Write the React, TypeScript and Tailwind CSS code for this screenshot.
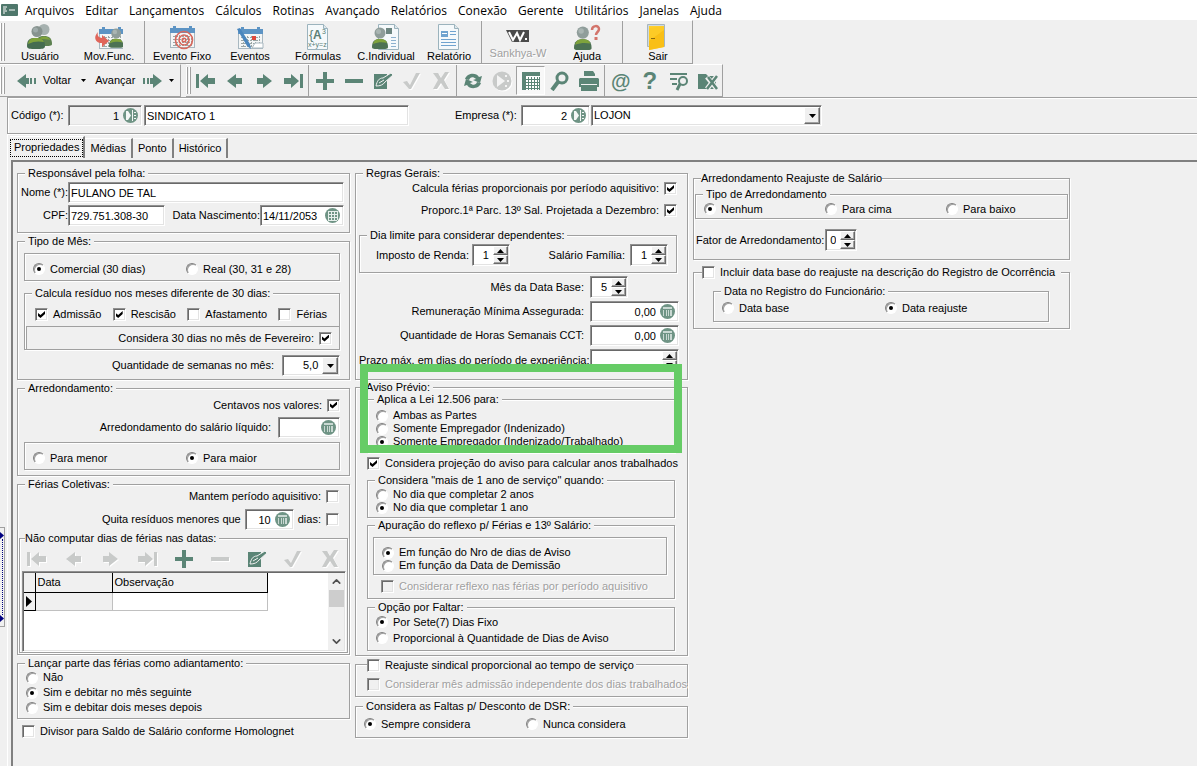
import type { ReactNode } from "react";
import { ChevronDown, ChevronUp } from "lucide-react";
import clsx from "clsx";

const menuItems = [
  "Arquivos", "Editar", "Lançamentos", "Cálculos", "Rotinas", "Avançado", "Relatórios",
  "Conexão", "Gerente", "Utilitários", "Janelas", "Ajuda",
];

const GREEN = "#5b8576";
const OFF = "#c8cac9";

/* ---------- toolbar drawings ---------- */

function Svg({ size = 20, className, children }: { size?: number; className?: string; children: ReactNode }) {
  return (
    <svg width={size} height={size} viewBox={`0 0 ${size} ${size}`} className={clsx("block shrink-0", className)} aria-hidden="true">
      {children}
    </svg>
  );
}

function Person() {
  return (
    <g>
      <circle cx="8" cy="6" r="5.5" fill="#8f9d9a" />
      <circle cx="6.5" cy="4.5" r="2.5" fill="#a9b5b2" />
      <path d="M0 20c0-6 3-8 8-8s8 2 8 8c0 2-2 2-8 2s-8 0-8-2z" fill="#4c7153" />
      <path d="M1 17c1-4 3-5 7-5s6 1 7 4c-4-1-9-1-14 1z" fill="#7fa23c" />
    </g>
  );
}

function Calendar() {
  return (
    <g>
      <rect x="1.5" y="4.5" width="24" height="17" fill="#f4f6f6" stroke="#a9b8c0" />
      <path d="M1 2h3V0h3v2h13V0h3v2h3v5H1z" fill="#5d94c4" />
      <path d="M4 10.5h19M4 13.500h19M4 16.500h19M4 19.500h19M6.500 9v12M10.500 9v12M14.500 9v12M18.500 9v12M22.500 9v12" stroke="#9aa6a6" strokeDasharray="2 1" />
    </g>
  );
}

function Doc({ x = 0 }: { x?: number }) {
  return (
    <g transform={`translate(${x} 0)`}>
      <path d="M.5.5h16l4 4v21H.5z" fill="#f5f9fb" stroke="#9bb3bd" />
      <path d="M16.500.5v4h4" fill="#dfe8ec" stroke="#9bb3bd" />
    </g>
  );
}

const bigIcons: Record<string, ReactNode> = {
  users: (
    <g transform="translate(1 0)">
      <circle cx="17" cy="5.500" r="5.500" fill="#a6b1af" />
      <path d="M10 19c0-6 2-7 7-7s8 2 8 8c0 2-3 2-8 2z" fill="#5c8050" />
      <path d="M12 15c2-3 8-4 12 1-4-1-8-1-12-1z" fill="#7fa23c" />
      <circle cx="10" cy="7.500" r="5.500" fill="#87938f" />
      <circle cx="8.500" cy="6" r="2.500" fill="#9fabaa" />
      <path d="M0 22c0-7 3-8 9-8s9 2 9 8c0 3-3 3-9 3s-9 0-9-3z" fill="#456c50" />
      <path d="M1 20c1-5 3-6 8-6s7 1 8 4c-5-1-10-1-16 2z" fill="#7fa23c" />
    </g>
  ),
  mov: (
    <g>
      <g transform="translate(3 3)"><Calendar /></g>
      <path d="M3 8c-5 5-3 11 4 11v4l7-6-7-6v3c-4 0-5-3-4-6z" fill="#e0655a" />
      <g transform="translate(14 4) scale(.9)"><Person /></g>
    </g>
  ),
  fixo: (
    <g transform="translate(1 2)">
      <Calendar />
      <g fill="none" stroke="#d8685c" strokeWidth="1.6">
        <circle cx="15" cy="14" r="8.500" />
        <circle cx="15" cy="14" r="5" />
        <circle cx="15" cy="14" r="1.800" />
      </g>
    </g>
  ),
  eventos: (
    <g transform="translate(1 3)">
      <Calendar />
      <rect x="15" y="9" width="4" height="4" fill="#e0493c" />
      <path d="M15 21l3-5h8v5z" fill="#fff" stroke="#a9b8c0" />
      <path d="M0 2l3-1 10 16 1 5-4-3z" fill="#4a86bd" />
    </g>
  ),
  formulas: (
    <g>
      <Doc x={3} />
      <text x="5" y="15" fontSize="13" fill="#5b7f77" fontFamily="Liberation Sans">{"{"}</text>
      <text x="9" y="15" fontSize="12" fontWeight="700" fill="#5b7f77" fontFamily="Liberation Sans">A</text>
      <text x="18" y="10" fontSize="7" fill="#5b7f77" fontFamily="Liberation Sans">3</text>
      <text x="4" y="23" fontSize="7" fill="#5b7f77" fontFamily="Liberation Sans">x+y=z</text>
    </g>
  ),
  individual: (
    <g>
      <Doc x={6} />
      <rect x="14" y="4" width="6" height="6" fill="#6c8580" />
      <path d="M19 13.500h5M19 16.500h5M19 19.500h5M19 22.500h5" stroke="#8db2cf" />
      <g transform="translate(0 3)"><Person /></g>
    </g>
  ),
  relatorio: (
    <g>
      <Doc x={3} />
      <rect x="6" y="7" width="7" height="6" fill="#6fa3cf" />
      <path d="M7 9.500h5" stroke="#fff" />
      <path d="M15 7.500h6M15 10.500h6M6 15.500h15M6 18.500h15M6 21.500h15" stroke="#6fa3cf" />
    </g>
  ),
  w: (
    <g transform="translate(2 6)">
      <path d="M0 0h23v12H6z" fill="#4b4b4b" />
      <path d="M3 2l4 8 4-7 3 7 4-8" fill="none" stroke="#fff" strokeWidth="2" />
      <rect x="19" y="8" width="2" height="2" fill="#fff" />
    </g>
  ),
  ajuda: (
    <g transform="translate(1 0)">
      <g transform="translate(0 2) scale(1.1)"><Person /></g>
      <path d="M18 6c0-5 7-5 7-1 0 3-3 3-3 6" fill="none" stroke="#d3746b" strokeWidth="2.500" />
      <rect x="20.500" y="13" width="3" height="3" fill="#d3746b" />
    </g>
  ),
  sair: (
    <g transform="translate(3 0)">
      <path d="M.5.5h17v22H.5z" fill="#cfd9df" stroke="#a7b5bd" />
      <path d="M2 2h15v20l-15 2z" fill="#ffcf2e" />
      <path d="M2 4L17 2v21L2 26z" fill="#fdcb26" />
      <path d="M2 17L17 6v17L2 26z" fill="#f9bf16" />
      <path d="M4 14.500h4" stroke="#8a6a10" />
    </g>
  ),
};

function ToolIcon({ name, off }: { name: string; off?: boolean }) {
  const c = off ? OFF : GREEN;
  const shapes: Record<string, ReactNode> = {
    first: <g fill={c}><rect x="0" y="3" width="3" height="14" /><path d="M12 3v4h7v6h-7v4L4 10z" /></g>,
    prev: <path d="M11 3v4h6v6h-6v4L2 10z" fill={c} />,
    next: <path d="M9 3v4H3v6h6v4l9-7z" fill={c} />,
    last: <g fill={c}><path d="M8 3v4H1v6h7v4l8-7z" /><rect x="17" y="3" width="3" height="14" /></g>,
    plus: <path d="M8 1h4v7h7v4h-7v7H8v-7H1V8h7z" fill={c} />,
    minus: <rect x="1" y="8" width="18" height="4" fill={c} />,
    edit: (
      <g>
        <path d="M1 3h13v15H1z" fill={c} />
        <path d="M3 15c1-5 3-8 7-8l8-5 2 2-8 7c-2 3-5 4-9 4z" fill={c} stroke="#f0f0f0" strokeWidth="1" />
        <path d="M6 12l5-3" stroke="#f0f0f0" />
      </g>
    ),
    check: <path d="M1 11l4-1 3 4 6-12h4L9 18H7z" fill={c} />,
    x: <path d="M2 2h5l3 5 4-6h4l-5 8 5 9h-4l-4-6-4 6H2l5-9z" fill={c} />,
    refresh: (
      <g fill={c}>
        <path d="M2 8c2-6 11-7 14-2l3-1-2 7-7-3 3-1c-3-3-6-2-7 1z" />
        <path d="M18 12c-2 6-11 7-14 2l-3 1 2-7 7 3-3 1c3 3 6 2 7-1z" />
      </g>
    ),
    play: (
      <g>
        <circle cx="10" cy="10" r="9.500" fill={c} />
        <path d="M5 4l8 6-8 6z" fill="#f4f4f4" />
        <path d="M13 4h2v2h-2zM15 9h2v2h-2zM13 14h2v2h-2z" fill="#f4f4f4" />
      </g>
    ),
    table: (
      <g>
        <rect x="1" y="2" width="18" height="17" fill="#fff" />
        <path d="M1 1h18v4H1zM1 5h4v14H1z" fill={c} />
        <path d="M5 8.500h14M5 11.500h14M5 14.500h14M5 17.500h14M7.500 6v13M10.500 6v13M13.500 6v13M16.500 6v13M18.500 6v13" stroke={c} />
      </g>
    ),
    search: (
      <g>
        <circle cx="12" cy="7" r="5" fill="none" stroke={c} strokeWidth="3" />
        <path d="M8 11l-6 8" stroke={c} strokeWidth="4" />
      </g>
    ),
    print: (
      <g fill={c}>
        <path d="M5 0h9l2 3v3H5zM1 7h18l1 1v8h-2v4H2v-4H0V8z" />
        <path d="M2 13.500h16M5 5.500h11" stroke="#f0f0f0" />
      </g>
    ),
    filter: (
      <g stroke={c} fill="none" strokeWidth="2">
        <path d="M1 3h17M1 8h7M3 13h5" />
        <circle cx="14" cy="10" r="4" />
        <path d="M11 13l-3 6" strokeWidth="3" />
      </g>
    ),
    box: (
      <g>
        <path d="M0 3h8l2 2h8v13H0z" fill={c} />
        <path d="M9 6l10 12M19 5L9 18" stroke="#f0f0f0" strokeWidth="5" />
        <path d="M10 6l9 12M19 5L9 18" stroke={c} strokeWidth="2.500" />
      </g>
    ),
  };
  return <Svg className={off ? "drop-shadow-[1px_1px_0_#fff]" : undefined}>{shapes[name]}</Svg>;
}

function RoundIcon({ kind }: { kind: "lookup" | "calc" | "date" }) {
  return (
    <Svg size={15}>
      <circle cx="7.500" cy="7.500" r="7.500" fill="#6f9485" />
      {kind === "lookup" && (
        <g fill="#f4f7f6">
          <path d="M3 3h2l3 4.500L5 12H3z" />
          <path d="M9 2h1v11H9zM11 4h2v1h-2zM11 7h2v1h-2zM11 10h2v1h-2z" />
        </g>
      )}
      {kind === "calc" && (
        <g fill="#c9d8d2">
          <path d="M3 3h9v2H3zM3 6h1v6H3zM6 6h1v6H6zM8 6h1v6H8zM10 6h2v6h-2z" />
        </g>
      )}
      {kind === "date" && (
        <path d="M3 3.500h9M3 6.500h9M3 9.500h9M3 12.500h9M3.500 3v9M6.500 3v9M9.500 3v9M12.500 3v9" stroke="#e6eeeb" />
      )}
    </Svg>
  );
}

/* ---------- form pieces ---------- */

const sunken =
  "border border-t-[#909090] border-l-[#909090] border-r-white border-b-white shadow-[inset_1px_1px_0_#696969,inset_-1px_-1px_0_#e3e3e3]";
const etched = "border border-[#a0a0a0] shadow-[1px_1px_0_#fff,inset_1px_1px_0_#fff]";

type GroupProps = { label: ReactNode; legendClass?: string; className?: string; children: ReactNode };

function Group({ label, legendClass, className, children }: GroupProps) {
  return (
    <fieldset className={clsx("min-w-0", etched, className)}>
      <legend className={clsx("bg-[#f0f0f0]", legendClass ?? "ml-[7px] h-3 px-[3px] leading-3")}>{label}</legend>
      {children}
    </fieldset>
  );
}

function Radio({ name, children, checked, className }: { name: string; children: ReactNode; checked?: boolean; className?: string }) {
  return (
    <label className={clsx("flex items-center gap-[5px] whitespace-nowrap", className)}>
      <input
        type="radio"
        name={name}
        defaultChecked={checked}
        className="grid size-3 shrink-0 appearance-none place-items-center rounded-full border border-t-[#808080] border-r-white border-b-white border-l-[#808080] bg-white shadow-[inset_1px_1px_0_#a0a0a0] before:size-1 before:rounded-full checked:before:bg-black"
      />
      {children}
    </label>
  );
}

type CheckProps = { children?: ReactNode; checked?: boolean; disabled?: boolean; before?: boolean; className?: string };

function Check({ children, checked, disabled, before, className }: CheckProps) {
  return (
    <label
      className={clsx(
        "flex items-center gap-[5px] whitespace-nowrap",
        before && "flex-row-reverse justify-start",
        disabled && "text-[#a0a0a0] [text-shadow:1px_1px_0_#fff]",
        className,
      )}
    >
      <input
        type="checkbox"
        defaultChecked={checked}
        disabled={disabled}
        className={clsx(
          "grid size-[13px] shrink-0 appearance-none place-items-center before:size-[7px] before:[clip-path:polygon(0_29%,0_71%,36%_100%,100%_43%,100%_0,36%_57%)] checked:before:bg-black",
          sunken,
          disabled ? "bg-[#f0f0f0]" : "bg-white",
        )}
      />
      {children}
    </label>
  );
}

type FieldProps = { id: string; value: string; className: string; icon?: "lookup" | "calc" | "date"; right?: boolean; gray?: boolean; label?: string };

function Field({ id, value, className, icon, right, gray, label }: FieldProps) {
  return (
    <div className={clsx("flex h-[21px] items-center", sunken, gray ? "bg-[#f0f0f0]" : "bg-white", className)}>
      <input
        id={id}
        aria-label={label}
        defaultValue={value}
        className={clsx("h-full w-full min-w-0 flex-1 bg-transparent px-0.5 outline-none", right && "pr-1 text-right")}
      />
      {icon && (
        <button type="button" aria-label="Abrir" className="mr-[3px] shrink-0">
          <RoundIcon kind={icon} />
        </button>
      )}
    </div>
  );
}

const raised =
  "border border-t-white border-r-[#696969] border-b-[#696969] border-l-white bg-[#f0f0f0] shadow-[inset_-1px_-1px_0_#a0a0a0]";

function Spin({ id, value, className }: { id: string; value: string; className: string }) {
  return (
    <div className={clsx("flex h-[22px] bg-white p-px", sunken, className)}>
      <input id={id} defaultValue={value} className="w-full min-w-0 flex-1 bg-transparent pr-1 text-right outline-none" />
      <div className="flex w-[15px] flex-col">
        <button type="button" aria-label="Aumentar" className={clsx("flex flex-1 items-center justify-center", raised)}>
          <svg width="7" height="4" viewBox="0 0 7 4"><path d="M0 4h7L3.500 0z" /></svg>
        </button>
        <button type="button" aria-label="Diminuir" className={clsx("flex flex-1 items-center justify-center", raised)}>
          <svg width="7" height="4" viewBox="0 0 7 4"><path d="M0 0h7L3.500 4z" /></svg>
        </button>
      </div>
    </div>
  );
}

function Combo({ id, value, className, label }: { id: string; value: string; className: string; label?: string }) {
  return (
    <div className={clsx("relative h-[21px] bg-white", sunken, className)}>
      <select id={id} aria-label={label} className="h-full w-full appearance-none bg-transparent px-0.5 outline-none">
        <option>{value}</option>
      </select>
      <span className={clsx("pointer-events-none absolute inset-y-px right-px flex w-4 items-center justify-center", raised)}>
        <svg width="7" height="4" viewBox="0 0 7 4"><path d="M0 0h7L3.500 4z" /></svg>
      </span>
    </div>
  );
}

/* ---------- bars ---------- */

function Grip() {
  return (
    <span className="flex h-full gap-px py-0.5">
      <span className="w-0.5 border-r border-[#a0a0a0] bg-white" />
      <span className="w-0.5 border-r border-[#a0a0a0] bg-white" />
    </span>
  );
}

const Sep = () => <span className="mx-px w-px self-stretch bg-[#a0a0a0]" />;

function BigButton({ icon, children, className, disabled }: { icon: string; children: ReactNode; className?: string; disabled?: boolean }) {
  return (
    <button
      type="button"
      disabled={disabled}
      className={clsx("flex flex-col items-center whitespace-nowrap", className ?? "w-[68px]", disabled && "text-[#a0a0a0] [text-shadow:1px_1px_0_#fff]")}
    >
      <svg width="28" height="26" viewBox="0 0 28 26" className={disabled ? "-mb-[3px] block" : "block"} aria-hidden="true">
        {bigIcons[icon]}
      </svg>
      <span className="leading-3">{children}</span>
    </button>
  );
}

function ToolButton({ name, label, off, pressed }: { name: string; label: string; off?: boolean; pressed?: boolean }) {
  return (
    <button
      type="button"
      aria-label={label}
      disabled={off}
      className={clsx(
        "flex h-[29px] w-[29px] items-center justify-center",
        pressed && "border border-t-[#a0a0a0] border-r-white border-b-white border-l-[#a0a0a0] bg-[#f8f8f8]",
      )}
    >
      {name === "at" || name === "help" ? (
        <span className={clsx("font-bold text-[#5b8576]", name === "at" ? "text-xl" : "text-2xl")}>{name === "at" ? "@" : "?"}</span>
      ) : (
        <ToolIcon name={name} off={off} />
      )}
    </button>
  );
}

const Caret = () => <svg width="5" height="3" viewBox="0 0 5 3"><path d="M0 0h5L2.500 3z" /></svg>;

function Toolbars() {
  return (
    <div>
      <div className="flex">
        <div className="flex h-[44px] items-start border-t border-r border-b border-t-white border-r-[#a0a0a0] border-b-[#a0a0a0]">
          <Grip />
          <div className="flex h-full pt-[3px]">
            <BigButton icon="users" className="w-[70px]">Usuário</BigButton>
            <BigButton icon="mov">Mov.Func.</BigButton>
          </div>
          <Sep />
          <div className="flex h-full pt-[3px]">
            <BigButton icon="fixo" className="w-[72px]">Evento Fixo</BigButton>
            <BigButton icon="eventos" className="w-16">Eventos</BigButton>
            <BigButton icon="formulas" className="w-[72px]">Fórmulas</BigButton>
            <BigButton icon="individual" className="w-16">C.Individual</BigButton>
            <BigButton icon="relatorio" className="w-[62px]">Relatório</BigButton>
          </div>
          <Sep />
          <div className="flex h-full pt-[3px]">
            <BigButton icon="w" className="w-[70px]" disabled>Sankhya-W</BigButton>
            <BigButton icon="ajuda">Ajuda</BigButton>
          </div>
          <Sep />
          <div className="flex h-full pt-[3px]">
            <BigButton icon="sair">Sair</BigButton>
          </div>
        </div>
      </div>
      <div className="flex h-[33px]">
        <div className="flex items-center border-t border-r border-b border-t-white border-r-[#a0a0a0] border-b-[#a0a0a0]">
          <Grip />
          <button type="button" className="ml-3 flex items-center gap-1.5">
            <Svg><path d="M9 3v4h3v6H9v4L0 10z" fill={GREEN} /><path d="M13 7h2v6h-2zM17 7h2v6h-2z" fill={GREEN} /></Svg>
            Voltar
          </button>
          <button type="button" aria-label="Opções de voltar" className="flex w-6 justify-center"><Caret /></button>
          <button type="button" className="flex items-center gap-[7px]">
            Avançar
            <Svg><path d="M11 3v4H8v6h3v4l9-7z" fill={GREEN} /><path d="M1 7h2v6H1zM5 7h2v6H5z" fill={GREEN} /></Svg>
          </button>
          <button type="button" aria-label="Opções de avançar" className="flex w-[18px] justify-center"><Caret /></button>
        </div>
        <div className="ml-[5px] flex items-center border-t border-r border-b border-t-white border-r-[#a0a0a0] border-b-[#a0a0a0]">
          <Grip />
          <ToolButton name="first" label="Primeiro" />
          <ToolButton name="prev" label="Registro anterior" />
          <ToolButton name="next" label="Próximo registro" />
          <ToolButton name="last" label="Último" />
          <Sep />
          <ToolButton name="plus" label="Incluir" />
          <ToolButton name="minus" label="Excluir" />
          <ToolButton name="edit" label="Alterar" />
          <ToolButton name="check" label="Confirmar" off />
          <ToolButton name="x" label="Cancelar" off />
          <Sep />
          <ToolButton name="refresh" label="Atualizar" />
          <ToolButton name="play" label="Executar" off />
          <ToolButton name="table" label="Grade" pressed />
          <ToolButton name="search" label="Procurar" />
          <ToolButton name="print" label="Imprimir" />
          <Sep />
          <ToolButton name="at" label="E-mail" />
          <ToolButton name="help" label="Ajuda" />
          <ToolButton name="filter" label="Filtrar" />
          <ToolButton name="box" label="Fechar" />
        </div>
      </div>
    </div>
  );
}

/* ---------- columns ---------- */

function VacationGrid() {
  return (
    <div className={clsx("mr-px ml-0.5 flex h-[81px] bg-white p-px", sunken)}>
      <div className="flex-1">
        <table className="table-fixed border-collapse text-left">
          <thead>
            <tr className="h-[19px] bg-[#f0f0f0]">
              <th aria-label="Indicador" className="w-[11px] border-r border-b border-black" />
              <th className="w-[77px] border-r border-b border-black px-0.5 font-normal">Data</th>
              <th className="w-[155px] border-r border-b border-black px-0.5 font-normal">Observação</th>
            </tr>
          </thead>
          <tbody>
            <tr className="h-[18px]">
              <td className="border-r border-b border-black bg-[#f0f0f0] p-0">
                <svg width="6" height="11" viewBox="0 0 6 11" className="ml-0.5"><path d="M0 0l6 5.500L0 11z" /></svg>
              </td>
              <td className="border-r border-b border-[#c0c0c0] bg-[#f0f0f0]" />
              <td className="border-r border-b border-[#c0c0c0]" />
            </tr>
          </tbody>
        </table>
      </div>
      <div className="flex w-4 flex-col items-center bg-[#f0f0f0] text-[#505050]">
        <ChevronUp size={13} strokeWidth={3} className="my-[2px]" />
        <span className="h-[17px] w-[15px] bg-[#cdcdcd]" />
        <ChevronDown size={13} strokeWidth={3} className="mt-auto mb-[2px]" />
      </div>
    </div>
  );
}

function LeftColumn() {
  return (
    <div className="flex w-[333px] flex-col gap-0.5">
      <Group label="Responsável pela folha:">
        <div className="flex flex-col gap-0.5 pt-[3px] pr-[5px] pb-1.5">
          <div className="flex items-center">
            <label htmlFor="nome" className="w-[50px] text-right">Nome (*):</label>
            <Field id="nome" value="FULANO DE TAL" className="flex-1" />
          </div>
          <div className="flex items-center">
            <label htmlFor="cpf" className="w-[50px] text-right">CPF:</label>
            <Field id="cpf" value="729.751.308-30" className="w-[97px]" />
            <label htmlFor="nasc" className="flex-1 text-right">Data Nascimento:</label>
            <Field id="nasc" value="14/11/2053" icon="date" className="w-[84px]" />
          </div>
        </div>
      </Group>

      <Group label="Tipo de Mês:">
        <div className="flex flex-col pt-1.5 pr-[9px] pb-[3px] pl-1.5">
          <div className={clsx("flex h-7 items-center px-2 pt-1", etched)}>
            <Radio name="mes" checked className="w-[153px]">Comercial (30 dias)</Radio>
            <Radio name="mes">Real (30, 31 e 28)</Radio>
          </div>
          <Group label="Calcula resíduo nos meses diferente de 30 dias:" className="mt-1.5">
            <div className="flex justify-between pt-[9px] pr-3 pb-[5px] pl-2.5">
              <Check checked>Admissão</Check>
              <Check checked>Rescisão</Check>
              <Check>Afastamento</Check>
              <Check>Férias</Check>
            </div>
            <div className="ml-px flex h-[23px] items-center justify-end border-t border-l border-[#a0a0a0] pr-[7px]">
              <Check checked before>Considera 30 dias no mês de Fevereiro:</Check>
            </div>
          </Group>
          <div className="mt-[5px] flex items-center justify-end gap-2">
            <label htmlFor="semanas">Quantidade de semanas no mês:</label>
            <div className="w-[58px]">
              <Combo id="semanas" value="5,0" className="w-full pl-[18px]" />
            </div>
          </div>
        </div>
      </Group>

      <Group label="Arredondamento:">
        <div className="flex flex-col items-end gap-1 pt-[3px] pr-[9px] pb-[5px] pl-1.5">
          <Check checked before className="h-4">Centavos nos valores:</Check>
          <div className="flex items-center gap-[7px]">
            <label htmlFor="liquido">Arredondamento do salário líquido:</label>
            <Field id="liquido" value="" icon="calc" className="w-[62px]" />
          </div>
          <div className={clsx("flex h-7 items-center self-stretch px-2 pt-1", etched)}>
            <Radio name="arred" className="w-[153px]">Para menor</Radio>
            <Radio name="arred" checked>Para maior</Radio>
          </div>
        </div>
      </Group>

      <Group label="Férias Coletivas:">
        <div className="flex flex-col items-end gap-1.5 pr-2.5 pb-0.5">
          <Check before className="h-[13px]">Mantem período aquisitivo:</Check>
          <div className="flex items-center gap-1">
            <label htmlFor="quita">Quita resíduos menores que</label>
            <Field id="quita" value="10" icon="calc" right className="w-[49px]" />
            <Check before>dias:</Check>
          </div>
        </div>
        <Group label="Não computar dias de férias nas datas:" className="mx-px mb-px" legendClass="ml-[5px] h-3 pr-[3px] leading-3">
          <div className="flex h-[27px] items-center justify-between px-[7px] pt-[3px]">
            <ToolIcon name="first" off />
            <ToolIcon name="prev" off />
            <ToolIcon name="next" off />
            <ToolIcon name="last" off />
            <ToolIcon name="plus" />
            <ToolIcon name="minus" off />
            <ToolIcon name="edit" />
            <ToolIcon name="check" off />
            <ToolIcon name="x" off />
          </div>
          <VacationGrid />
        </Group>
      </Group>

      <Group label="Lançar parte das férias como adiantamento:">
        <div className="flex flex-col pt-px pb-[3px] pl-2">
          <Radio name="lancar" className="h-[15px]">Não</Radio>
          <Radio name="lancar" checked className="h-[15px]">Sim e debitar no mês seguinte</Radio>
          <Radio name="lancar" className="h-[15px]">Sim e debitar dois meses depois</Radio>
        </div>
      </Group>

      <Check className="mt-1 ml-[5px]">Divisor para Saldo de Salário conforme Homolognet</Check>
    </div>
  );
}

function MiddleColumn() {
  return (
    <div className="flex w-[333px] flex-col">
      <Group label="Regras Gerais:">
        <div className="flex flex-col gap-[9px] pt-[3px] pr-2.5">
          <Check checked before className="h-[13px] self-end">Calcula férias proporcionais por período aquisitivo:</Check>
          <Check checked before className="h-[13px] self-end">Proporc.1ª Parc. 13º Sal. Projetada a Dezembro:</Check>
        </div>
        <Group label="Dia limite para considerar dependentes:" className="mt-3 mr-2.5 ml-[3px]">
          <div className="flex items-center justify-between pt-[3px] pr-2 pb-1.5 pl-4">
            <div className="flex items-center gap-[3px]">
              <label htmlFor="renda">Imposto de Renda:</label>
              <Spin id="renda" value="1" className="w-[38px]" />
            </div>
            <div className="flex items-center gap-[5px]">
              <label htmlFor="familia">Salário Família:</label>
              <Spin id="familia" value="1" className="w-[38px]" />
            </div>
          </div>
        </Group>
        <div className="flex flex-col gap-[3px] pt-[3px] pb-2 pl-[3px]">
          <div className="flex items-center">
            <label htmlFor="base" className="w-[225px] text-right">Mês da Data Base:</label>
            <Spin id="base" value="5" className="ml-1.5 w-[38px]" />
          </div>
          <div className="flex items-center">
            <label htmlFor="minima" className="w-[225px] text-right">Remuneração Mínima Assegurada:</label>
            <Field id="minima" value="0,00" icon="calc" right className="ml-1.5 w-[89px]" />
          </div>
          <div className="flex items-center">
            <label htmlFor="horas" className="w-[225px] text-right">Quantidade de Horas Semanais CCT:</label>
            <Field id="horas" value="0,00" icon="calc" right className="ml-1.5 w-[89px]" />
          </div>
          <div className="flex items-center">
            <label htmlFor="prazo" className="w-[225px] text-right whitespace-nowrap">Prazo máx. em dias do período de experiência:</label>
            <Spin id="prazo" value="" className="ml-1.5 w-[89px]" />
          </div>
        </div>
      </Group>

      <Group label="Aviso Prévio:" className="relative mt-px">
        <div className="flex flex-col pr-3 pb-1 pl-[11px]">
          <Group label="Aplica a Lei 12.506 para:" legendClass="ml-1.5 h-3 px-[3px] leading-3">
            <div className="flex flex-col pt-1 pb-1 pl-2">
              <Radio name="lei" className="h-[13px]">Ambas as Partes</Radio>
              <Radio name="lei" className="h-[13px]">Somente Empregador (Indenizado)</Radio>
              <Radio name="lei" checked className="h-[13px]">Somente Empregador (Indenizado/Trabalhado)</Radio>
            </div>
          </Group>
          <Check checked className="mt-1 mb-1">Considera projeção do aviso para calcular anos trabalhados</Check>
          <Group label={'Considera "mais de 1 ano de serviço" quando:'}>
            <div className="flex flex-col pt-0.5 pb-[3px] pl-2">
              <Radio name="servico" className="h-[13px]">No dia que completar 2 anos</Radio>
              <Radio name="servico" checked className="h-[13px]">No dia que completar 1 ano</Radio>
            </div>
          </Group>
          <Group label="Apuração do reflexo p/ Férias e 13º Salário:" className="mt-px">
            <div className="pt-1.5 pr-[7px] pb-[5px] pl-[5px]">
              <div className={clsx("flex flex-col pt-2 pb-0.5 pl-2", etched)}>
                <Radio name="reflexo" checked className="h-[13px]">Em função do Nro de dias de Aviso</Radio>
                <Radio name="reflexo" className="h-[13px]">Em função da Data de Demissão</Radio>
              </div>
              <Check disabled className="mt-[5px] ml-2">Considerar reflexo nas férias por período aquisitivo</Check>
            </div>
          </Group>
          <Group label="Opção por Faltar:" className="mt-0.5">
            <div className="flex flex-col pt-px pb-1 pl-2">
              <Radio name="faltar" checked className="h-4">Por Sete(7) Dias Fixo</Radio>
              <Radio name="faltar" className="h-4">Proporcional à Quantidade de Dias de Aviso</Radio>
            </div>
          </Group>
        </div>
        {/* highlight drawn over the notice rules */}
        <div className="pointer-events-none absolute -top-[29px] left-1 h-[89px] w-[322px] border-8 border-[#66cc66]" />
      </Group>

      <Group
        label={<Check className="h-[13px]">Reajuste sindical proporcional ao tempo de serviço</Check>}
        legendClass="ml-[11px] flex h-4 items-end pr-0.5"
      >
        <Check disabled className="mt-1.5 mb-[5px] ml-[11px]">Considerar mês admissão independente dos dias trabalhados</Check>
      </Group>

      <Group label="Considera as Faltas p/ Desconto de DSR:" className="mt-[3px]">
        <div className="flex pt-[5px] pb-1.5 pl-2">
          <Radio name="dsr" checked className="h-[14px] w-[162px]">Sempre considera</Radio>
          <Radio name="dsr" className="h-[14px]">Nunca considera</Radio>
        </div>
      </Group>
    </div>
  );
}

function RightColumn() {
  return (
    <div className="flex w-[377px] flex-col gap-1.5 pt-[5px]">
      <Group label="Arredondamento Reajuste de Salário" legendClass="ml-[7px] h-3 leading-3">
        <div className="px-px pt-1 pb-2">
          <Group label="Tipo de Arredondamento">
            <div className="flex pt-0.5 pb-0.5 pl-2">
              <Radio name="tipo" checked className="h-[14px] w-[121px]">Nenhum</Radio>
              <Radio name="tipo" className="h-[14px] w-[121px]">Para cima</Radio>
              <Radio name="tipo" className="h-[14px]">Para baixo</Radio>
            </div>
          </Group>
          <div className="mt-2.5 ml-px flex items-center gap-px">
            <label htmlFor="fator">Fator de Arredondamento:</label>
            <Spin id="fator" value="0" className="w-8" />
          </div>
        </div>
      </Group>

      <Group
        label={<Check className="h-[13px]">Incluir data base do reajuste na descrição do Registro de Ocorrência</Check>}
        legendClass="ml-2 h-[13px] pr-1.5"
      >
        <div className="pt-1.5 pr-5 pb-1.5 pl-[19px]">
          <Group label="Data no Registro do Funcionário:">
            <div className="flex pt-1 pb-1.5 pl-2">
              <Radio name="registro" className="h-[14px] w-[163px]">Data base</Radio>
              <Radio name="registro" checked className="h-[14px]">Data reajuste</Radio>
            </div>
          </Group>
        </div>
      </Group>
    </div>
  );
}

const tabs = ["Médias", "Ponto", "Histórico"];

export default function App() {
  return (
    <div className="flex min-h-screen flex-col overflow-hidden bg-[#f0f0f0] font-['Liberation_Sans',Arial,sans-serif] text-[11px] leading-[13px] text-black">
      <nav className="flex h-5 items-center gap-[11px] bg-white pl-px font-['Open_Sans','Noto_Sans',sans-serif] text-[12px] whitespace-nowrap">
        <svg width="17" height="12" viewBox="0 0 17 12" className="-mr-1" aria-hidden="true">
          <rect width="17" height="12" rx="1" fill="#4f776b" />
          <path d="M2 3h4M2 5h3M2 7h4M8 6h6M2 9h2" stroke="#fff" />
        </svg>
        {menuItems.map((item) => (
          <button key={item} type="button">{item}</button>
        ))}
      </nav>

      <Toolbars />

      <div className="flex flex-1">
        <div className="flex w-[7px] flex-col pt-[430px]">
          <div className="flex h-[100px] w-[5px] flex-col items-center justify-between border border-l-0 border-[#a0a0a0] py-1">
            <svg width="4" height="7" viewBox="0 0 4 7"><path d="M0 0l4 3.500L0 7z" fill="#000080" /></svg>
            <span className="w-0 flex-1 border-l border-dotted border-[#000080]" />
            <svg width="4" height="7" viewBox="0 0 4 7"><path d="M0 0l4 3.500L0 7z" fill="#000080" /></svg>
          </div>
        </div>

        <main className="flex min-w-0 flex-1 flex-col border-t border-t-[#a0a0a0]">
          <div className="flex h-[36px] items-center border-b border-l border-[#a0a0a0] pl-[3px] shadow-[0_1px_0_#fff,inset_1px_1px_0_#fff]">
            <label htmlFor="codigo" className="w-[57px]">Código (*):</label>
            <Field id="codigo" value="1" icon="lookup" right gray className="w-[74px]" />
            <Field id="descricao" label="Descrição" value="SINDICATO 1" className="ml-0.5 w-[265px]" />
            <label htmlFor="empresa" className="ml-[46px] w-[66px]">Empresa (*):</label>
            <Field id="empresa" value="2" icon="lookup" right className="w-[69px]" />
            <Combo id="empresaNome" label="Nome da empresa" value="LOJON" className="ml-px w-[231px]" />
          </div>

          <div className="flex flex-1 flex-col border-l border-white pt-0.5">
            <div role="tablist" className="flex items-end pl-0.5">
              <button type="button" role="tab" aria-selected="true" className="h-[22px] border-t border-r-2 border-t-white border-r-[#808080]">
                <span className="block border border-dotted border-black px-[3px] pt-px pb-0.5">Propriedades</span>
              </button>
              {tabs.map((tab) => (
                <button key={tab} type="button" role="tab" className="h-5 border-t border-r-2 border-t-white border-r-[#808080] px-[5px]">
                  {tab}
                </button>
              ))}
            </div>

            <div className="mt-0.5 ml-[3px] flex flex-1 flex-wrap items-start gap-x-[5px] border-t-2 border-l-2 border-[#808080] pt-[5px] pl-1">
              <LeftColumn />
              <MiddleColumn />
              <RightColumn />
            </div>
          </div>
        </main>
      </div>
    </div>
  );
}
